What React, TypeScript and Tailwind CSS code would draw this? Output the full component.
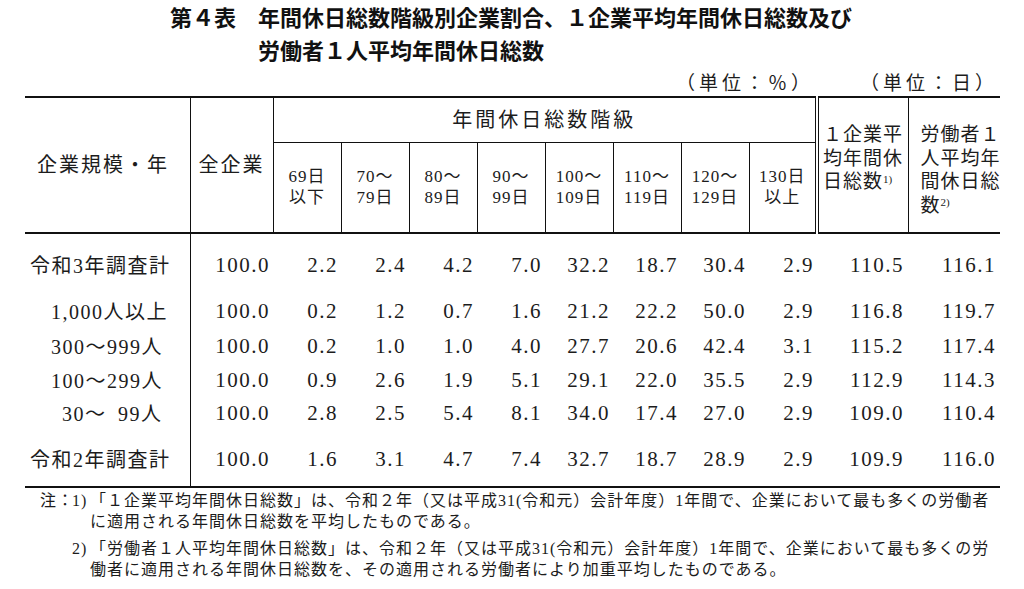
const serif = "font-['Liberation_Serif','Noto_Sans_CJK_JP',serif]";

type Row = {
  label: string;
  labelClass: string;
  height: string;
  values: string[];
};

const rows: Row[] = [
  {
    label: "令和3年調査計",
    labelClass: "pl-[5px]",
    height: "h-[36px]",
    values: ["100.0", "2.2", "2.4", "4.2", "7.0", "32.2", "18.7", "30.4", "2.9", "110.5", "116.1"],
  },
  {
    label: "1,000人以上",
    labelClass: "pl-[26px]",
    height: "h-[36px]",
    values: ["100.0", "0.2", "1.2", "0.7", "1.6", "21.2", "22.2", "50.0", "2.9", "116.8", "119.7"],
  },
  {
    label: "300～999人",
    labelClass: "pl-[26px]",
    height: "h-[34px]",
    values: ["100.0", "0.2", "1.0", "1.0", "4.0", "27.7", "20.6", "42.4", "3.1", "115.2", "117.4"],
  },
  {
    label: "100～299人",
    labelClass: "pl-[26px]",
    height: "h-[33px]",
    values: ["100.0", "0.9", "2.6", "1.9", "5.1", "29.1", "22.0", "35.5", "2.9", "112.9", "114.3"],
  },
  {
    label: "30～\u200299人",
    labelClass: "pl-[37px]",
    height: "h-[34px]",
    values: ["100.0", "2.8", "2.5", "5.4", "8.1", "34.0", "17.4", "27.0", "2.9", "109.0", "110.4"],
  },
  {
    label: "令和2年調査計",
    labelClass: "pl-[5px]",
    height: "h-[36px]",
    values: ["100.0", "1.6", "3.1", "4.7", "7.4", "32.7", "18.7", "28.9", "2.9", "109.9", "116.0"],
  },
];

const bands: [string, string][] = [
  ["69日", "以下"],
  ["70～", "79日"],
  ["80～", "89日"],
  ["90～", "99日"],
  ["100～", "109日"],
  ["110～", "119日"],
  ["120～", "129日"],
  ["130日", "以上"],
];

const Spacer = ({ height }: { height: string }) => (
  <tr className={height}>
    <td className="border-r border-[#111] p-0" />
    <td colSpan={11} className="p-0" />
  </tr>
);

const DataRow = ({ row }: { row: Row }) => (
  <tr className={row.height}>
    <td
      className={`border-r border-[#111] p-0 text-left text-[20px] tracking-[1.5px] whitespace-nowrap ${row.labelClass}`}
    >
      {row.label}
    </td>
    {row.values.map((value, index) => (
      <td
        key={index}
        className={`p-0 text-right text-[21px] tracking-[1.5px] ${index >= 9 ? "pr-[4px]" : "pr-[3px]"}`}
      >
        {value}
      </td>
    ))}
  </tr>
);

export default function App() {
  return (
    <div className={`h-[589px] w-[1024px] overflow-hidden bg-white text-[#1c1c1c] ${serif}`}>
      <div className="font-['Noto_Sans_CJK_JP',sans-serif] text-[22px] leading-[33px] font-bold text-[#111] whitespace-nowrap">
        <div className="pl-[170px]">第４表　年間休日総数階級別企業割合、１企業平均年間休日総数及び</div>
        <div className="pl-[258px]">労働者１人平均年間休日総数</div>
      </div>

      <div className="mt-[6px] flex h-[24px] w-[1000px] items-center justify-end text-[19px] leading-[24px] tracking-[4px]">
        <span>（単位：％）</span>
        <span className="mr-[2px] ml-[46px]">（単位：日）</span>
      </div>

      <table className="ml-[25px] w-[975px] table-fixed border-collapse border-t-2 border-b-2 border-[#111]">
        <colgroup>
          <col className="w-[165px]" />
          <col className="w-[83px]" />
          {bands.map((_, index) => (
            <col key={index} className="w-[68px]" />
          ))}
          <col className="w-[91px]" />
          <col className="w-[92px]" />
        </colgroup>
        <thead className="border-b-2 border-[#111]">
          <tr className="h-[45px]">
            <th
              rowSpan={2}
              className="border-r border-[#111] p-0 pl-[12px] text-left text-[20px] font-normal tracking-[2px] whitespace-nowrap"
            >
              企業規模・年
            </th>
            <th
              rowSpan={2}
              className="border-r border-[#111] p-0 text-center text-[20px] font-normal tracking-[2px] whitespace-nowrap"
            >
              全企業
            </th>
            <th
              colSpan={8}
              className="border-b border-[#111] p-0 text-center text-[20px] font-normal tracking-[3px]"
            >
              年間休日総数階級
            </th>
            <th
              rowSpan={2}
              className="border-r border-l-4 border-double border-[#111] p-0 pt-[25px] pl-[4px] text-left align-top text-[19px] leading-[23.5px] font-normal tracking-[1px] whitespace-nowrap"
            >
              １企業平
              <br />
              均年間休
              <br />
              日総数<sup className="text-[11px] tracking-normal">1)</sup>
            </th>
            <th
              rowSpan={2}
              className="p-0 pt-[25px] pl-[12px] text-left align-top text-[19px] leading-[23.5px] font-normal tracking-[1px] whitespace-nowrap"
            >
              労働者１
              <br />
              人平均年
              <br />
              間休日総
              <br />
              数<sup className="text-[11px] tracking-normal">2)</sup>
            </th>
          </tr>
          <tr className="h-[91px]">
            {bands.map(([top, bottom], index) => (
              <th
                key={top}
                className={`p-0 text-center text-[17px] leading-[21px] font-normal tracking-[1px] whitespace-nowrap ${
                  index < bands.length - 1 ? "border-r border-[#111]" : ""
                }`}
              >
                {top}
                <br />
                {bottom}
              </th>
            ))}
          </tr>
        </thead>
        <tbody>
          <Spacer height="h-[15px]" />
          <DataRow row={rows[0]} />
          <Spacer height="h-[10px]" />
          <DataRow row={rows[1]} />
          <DataRow row={rows[2]} />
          <DataRow row={rows[3]} />
          <DataRow row={rows[4]} />
          <Spacer height="h-[11px]" />
          <DataRow row={rows[5]} />
          <Spacer height="h-[9px]" />
        </tbody>
      </table>

      <div className="mt-[2px] ml-[40px] flex text-[16px] leading-[21px] tracking-[1px] whitespace-nowrap">
        <span className="w-[32px] shrink-0">注：</span>
        <div className="flex flex-col gap-[6px]">
          <div className="flex">
            <span className="w-[18px] shrink-0">1)</span>
            <div>
              <div>「１企業平均年間休日総数」は、令和２年（又は平成31(令和元）会計年度）1年間で、企業において最も多くの労働者</div>
              <div>に適用される年間休日総数を平均したものである。</div>
            </div>
          </div>
          <div className="flex">
            <span className="w-[18px] shrink-0">2)</span>
            <div>
              <div>「労働者１人平均年間休日総数」は、令和２年（又は平成31(令和元）会計年度）1年間で、企業において最も多くの労</div>
              <div>働者に適用される年間休日総数を、その適用される労働者により加重平均したものである。</div>
            </div>
          </div>
        </div>
      </div>
    </div>
  );
}
